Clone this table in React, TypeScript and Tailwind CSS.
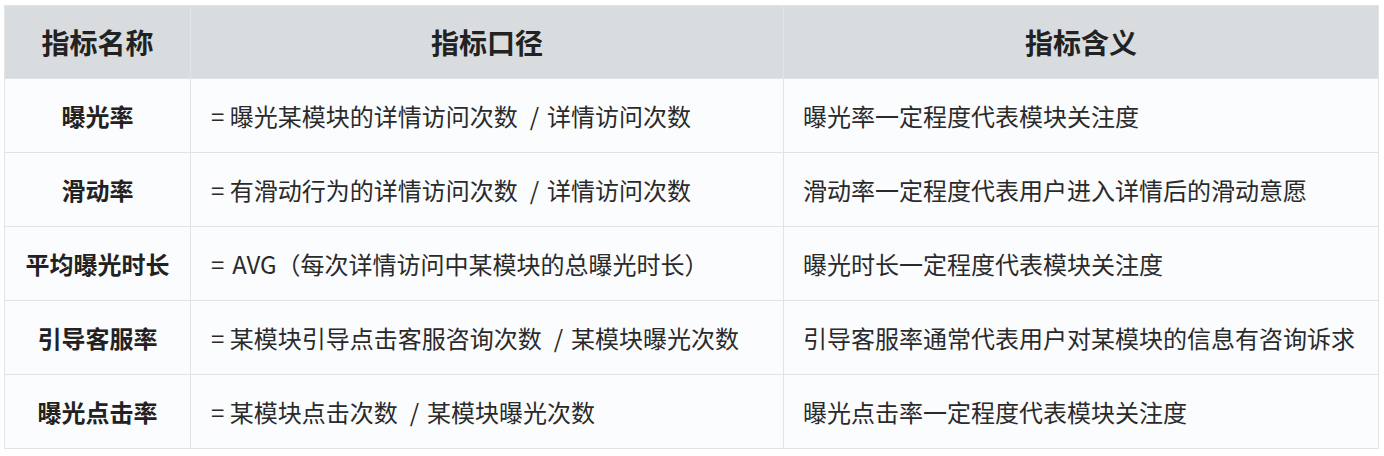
const rows = [
  { name: "曝光率", formula: "= 曝光某模块的详情访问次数\u2002/\u2004详情访问次数", meaning: "曝光率一定程度代表模块关注度" },
  { name: "滑动率", formula: "= 有滑动行为的详情访问次数\u2002/\u2004详情访问次数", meaning: "滑动率一定程度代表用户进入详情后的滑动意愿" },
  { name: "平均曝光时长", formula: "=\u2004AVG（每次详情访问中某模块的总曝光时长）", meaning: "曝光时长一定程度代表模块关注度" },
  { name: "引导客服率", formula: "= 某模块引导点击客服咨询次数\u2002/\u2004某模块曝光次数", meaning: "引导客服率通常代表用户对某模块的信息有咨询诉求" },
  { name: "曝光点击率", formula: "= 某模块点击次数\u2002/\u2004某模块曝光次数", meaning: "曝光点击率一定程度代表模块关注度" },
];

export default function App() {
  return (
    <div
      className="w-[1384px] h-[456px] bg-white pt-[5px] pl-[4px]"
      style={{ fontFamily: '"Noto Sans CJK SC", "Noto Sans", sans-serif' }}
    >
      <table className="table-fixed border-collapse w-[1374px] text-[#222]">
        <colgroup>
          <col className="w-[186px]" />
          <col className="w-[593px]" />
          <col className="w-[595px]" />
        </colgroup>
        <thead>
          <tr className="h-[73px] bg-[#d9dcde]">
            <th className="border border-[#e1e4e7] text-[28px] font-bold text-center">指标名称</th>
            <th className="border border-[#e1e4e7] text-[28px] font-bold text-center">指标口径</th>
            <th className="border border-[#e1e4e7] text-[28px] font-bold text-center">指标含义</th>
          </tr>
        </thead>
        <tbody className="bg-[#fbfcfe]">
          {rows.map((r) => (
            <tr key={r.name} className="h-[74px]">
              <td className="border border-[#e1e4e7] text-[24px] font-bold text-center">{r.name}</td>
              <td className="border border-[#e1e4e7] text-[24px] pl-[20px] text-[#2a2a2a] whitespace-nowrap">{r.formula}</td>
              <td className="border border-[#e1e4e7] text-[24px] pl-[19px] text-[#2a2a2a] whitespace-nowrap">{r.meaning}</td>
            </tr>
          ))}
        </tbody>
      </table>
    </div>
  );
}
